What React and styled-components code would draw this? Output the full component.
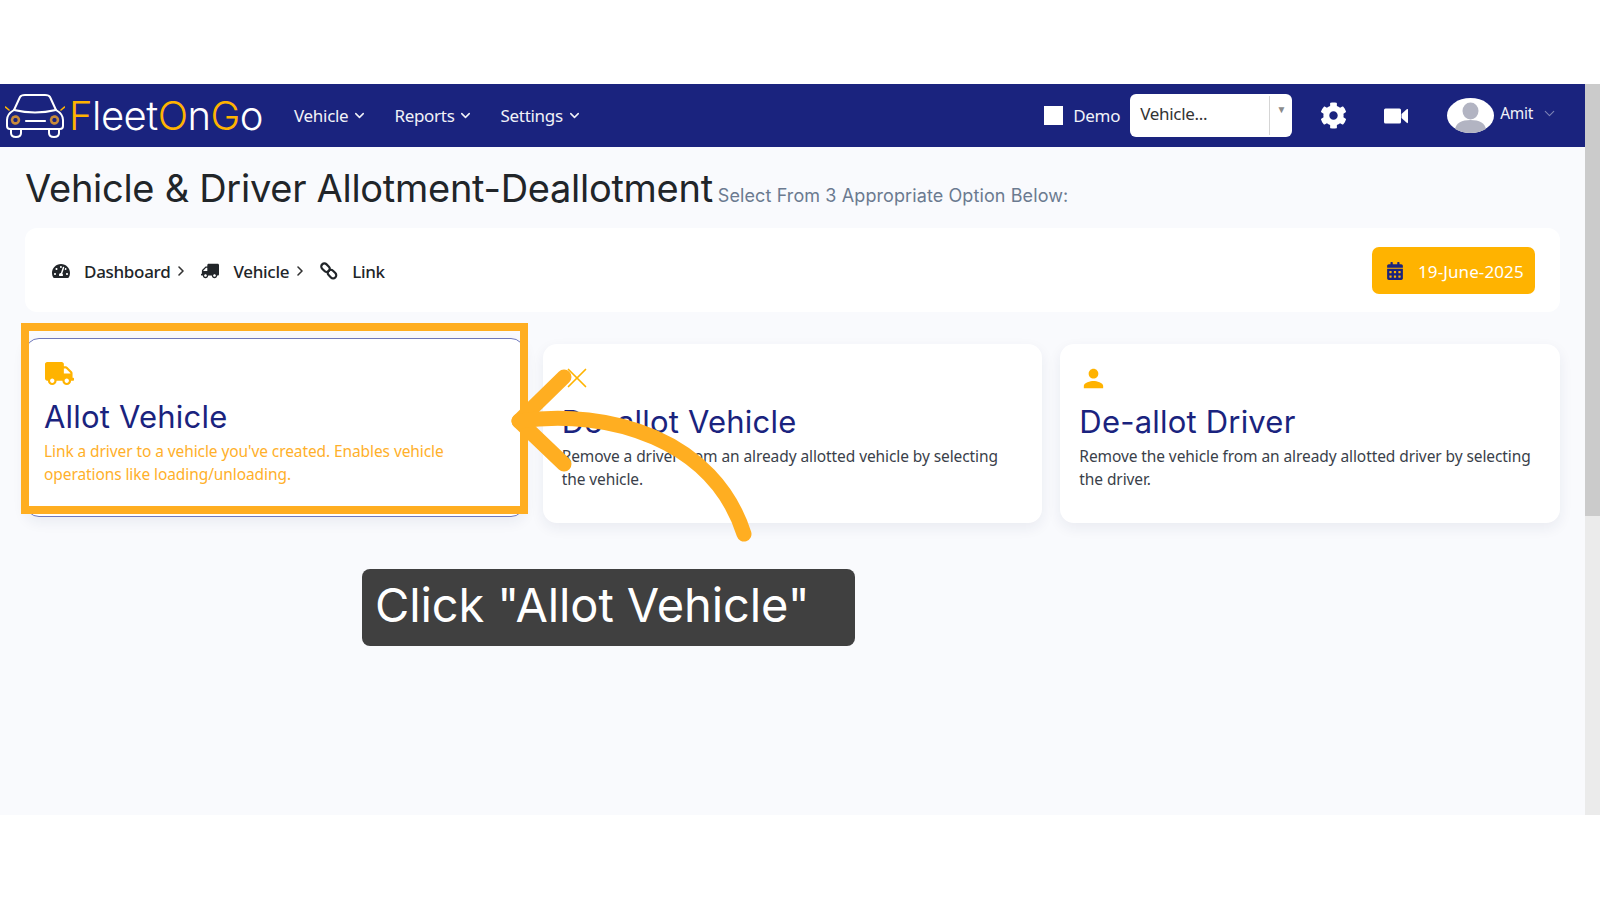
import React from "react";
import styled, { createGlobalStyle } from "styled-components";
import { FaTachometerAlt, FaTruck, FaCalendarAlt, FaCog } from "react-icons/fa";
import { MdPerson } from "react-icons/md";
import { FiChevronRight, FiChevronDown, FiX } from "react-icons/fi";

const Global = createGlobalStyle`
  html, body { margin: 0; background: #fff; }
  body { font-family: "Noto Sans", "Open Sans", sans-serif; overflow: hidden; }
  * { box-sizing: border-box; }
`;

const Page = styled.div`
  position: relative;
  width: 1600px;
  height: 900px;
  padding-top: 84px;
`;
const Screen = styled.div`
  display: flex;
  height: 731px;
`;
const Main = styled.div`
  flex: 1;
  min-width: 0;
  background: #f9fafd;
`;
const Scrollbar = styled.div`
  width: 15px;
  background: #ebebeb;
`;
const Thumb = styled.div`
  height: 432px;
  background: #cbcbcb;
`;
const Navbar = styled.header`
  height: 63px;
  background: #1a237e;
  display: flex;
  align-items: center;
  padding-left: 5px;
  color: #fff;
`;
const Brand = styled.div`
  display: flex;
  align-items: center;
  gap: 4px;
  width: 289px;
`;
const Wordmark = styled.span`
  font-family: "Inter", sans-serif;
  font-weight: 300;
  font-size: 40px;
  letter-spacing: -0.5px;
  line-height: 1;
  color: #fff;
`;
const Accent = styled.span`
  color: #ffb300;
`;
const NavMenu = styled.nav`
  display: flex;
  gap: 27px;
  padding-top: 0;
`;
const NavItem = styled.a`
  display: flex;
  align-items: center;
  gap: 4px;
  font-size: 17px;
  letter-spacing: -0.3px;
  color: #f1f2f8;
`;
const NavRight = styled.div`
  margin-left: auto;
  display: flex;
  align-items: center;
  padding-right: 27px;
`;
const DemoBox = styled.span`
  width: 19px;
  height: 19px;
  background: #fff;
  margin-right: 10px;
`;
const DemoLabel = styled.span`
  font-size: 17px;
  letter-spacing: -0.3px;
  margin-right: 10px;
  color: #f1f2f8;
`;
const VehicleSelect = styled.div`
  width: 162px;
  height: 43px;
  background: #fff;
  border-radius: 6px;
  display: flex;
  align-items: stretch;
  color: #333;
  font-size: 17px;
  letter-spacing: -0.3px;
  margin-right: 28px;
`;
const SelectValue = styled.span`
  width: 140px;
  padding-left: 10px;
  border-right: 1px solid #d5d5d5;
  margin: 2px 0;
  line-height: 35px;
`;
const SelectCaret = styled.span`
  flex: 1;
  text-align: center;
  font-size: 10px;
  line-height: 30px;
  color: #8a8a8a;
`;
const NavIconBox = styled.span`
  display: flex;
  font-size: ${(p) => p.$size}px;
  margin-right: ${(p) => p.$gap}px;
`;
const Avatar = styled.svg`
  width: 47px;
  height: 35px;
  margin-right: 6px;
`;
const UserName = styled.span`
  font-size: 15.5px;
  letter-spacing: -0.3px;
  margin-right: 8px;
  margin-top: -5px;
  color: #f1f2f8;
`;
const UserChevron = styled.span`
  display: flex;
  font-size: 17px;
  color: #7d83b5;
  margin-top: -4px;
`;
const Content = styled.main`
  padding: 0 25px;
`;
const TitleRow = styled.div`
  height: 81px;
  display: flex;
  align-items: baseline;
  padding: 16px 0 0 0;
`;
const Title = styled.h1`
  margin: 0;
  font-family: "Inter", sans-serif;
  font-weight: 400;
  font-size: 38px;
  letter-spacing: -0.28px;
  line-height: 50px;
  white-space: nowrap;
  color: #212529;
`;
const Subtitle = styled.span`
  font-family: "Inter", sans-serif;
  font-size: 18px;
  margin-left: 5px;
  letter-spacing: 0.1px;
  white-space: nowrap;
  color: #6b7a90;
`;
const CrumbBar = styled.div`
  height: 84px;
  background: #fff;
  border-radius: 12px;
  display: flex;
  align-items: center;
  justify-content: space-between;
  padding: 0 25px 0 27px;
`;
const Crumbs = styled.div`
  display: flex;
  align-items: center;
  font-size: 17px;
  font-weight: 500;
  letter-spacing: -0.3px;
  padding-top: 2px;
  color: #212529;
`;
const CrumbIcon = styled.span`
  display: flex;
  width: 18px;
  font-size: 18px;
  margin-right: 14px;
  transform: ${(p) => (p.$flip ? "scaleX(-1)" : "none")};
`;
const CrumbSep = styled.span`
  display: flex;
  font-size: 16px;
  margin: 0 12px 0 3px;
  color: #333;
`;
const DateButton = styled.div`
  width: 163px;
  height: 47px;
  border-radius: 7px;
  background: #ffb300;
  display: flex;
  align-items: center;
  gap: 14px;
  padding: 2px 0 0 14px;
  font-size: 17px;
  letter-spacing: 0.1px;
  color: #fff;
`;
const DateIcon = styled.span`
  display: flex;
  font-size: 18px;
  color: #1a237e;
`;
const CardGrid = styled.section`
  margin-top: 32px;
  display: grid;
  grid-template-columns: repeat(3, 1fr);
  gap: 18px;
`;
const Card = styled.article`
  height: 179px;
  background: #fff;
  border-radius: 14px;
  padding: 20px 19px 0;
  box-shadow: 0 5px 14px rgba(30, 40, 80, 0.07);
  ${(p) => p.$active && `
    transform: translateY(-6px);
    border: 1px solid #6f78bb;
    padding: 20px 18px 0;
  `}
`;
const CardIcon = styled.div`
  height: 28px;
  display: flex;
  align-items: center;
  font-size: ${(p) => p.$size}px;
  color: #ffb300;
  margin-left: ${(p) => p.$shift || 0}px;
`;
const CardTitle = styled.h2`
  margin: 10px 0 0;
  font-family: "Inter", sans-serif;
  font-weight: 400;
  font-size: 31px;
  letter-spacing: 0.2px;
  line-height: 40px;
  color: #1a237e;
`;
const CardText = styled.p`
  margin: 3px 0 0;
  font-size: 15.5px;
  letter-spacing: -0.09px;
  line-height: 22.8px;
  color: ${(p) => (p.$active ? "#ffb02a" : "#3a3f4a")};
`;
const Highlight = styled.div`
  position: absolute;
  left: 21px;
  top: 323px;
  width: 507px;
  height: 191px;
  border: 8.5px solid #ffae21;
`;
const Arrow = styled.svg`
  position: absolute;
  left: 500px;
  top: 360px;
  width: 260px;
  height: 190px;
  overflow: visible;
`;
const Tip = styled.div`
  position: absolute;
  left: 362px;
  top: 569px;
  width: 493px;
  height: 77px;
  background: #404040;
  border-radius: 8px;
  padding-left: 13px;
  font-family: "Inter", sans-serif;
  font-size: 47px;
  letter-spacing: -0.1px;
  line-height: 71px;
  color: #fff;
  white-space: nowrap;
`;

function CarLogo() {
  return (
    <svg width="60" height="46" viewBox="0 0 60 46" fill="none" stroke="#fff" strokeWidth="2" strokeLinecap="round" strokeLinejoin="round">
      <path d="M9 17 L15 4 Q16 2 20 2 H40 Q44 2 45 4 L51 17" />
      <path d="M9 17 Q30 22 51 17" />
      <path d="M9 17 Q2 21 2 27 V33 Q2 36 5 36 H55 Q58 36 58 33 V27 Q58 21 51 17" />
      <path d="M6 36 V40 Q6 44 11 44 Q16 44 16 40 V36 M44 36 V40 Q44 44 49 44 Q54 44 54 40 V36" />
      <path d="M21 28 H40" strokeWidth="2.2" />
      <path d="M0.5 14 L4 17 M59.5 14 L56 17" stroke="#ffb300" strokeWidth="1.6" />
      <circle cx="10.5" cy="27" r="3.4" stroke="#c88a3a" strokeDasharray="1.6 0.8" strokeWidth="2.6" />
      <circle cx="49.5" cy="27" r="3.4" stroke="#c88a3a" strokeDasharray="1.6 0.8" strokeWidth="2.6" />
    </svg>
  );
}

const ChainIcon = () => (
  <svg width="18" height="18" viewBox="0 0 18 18" fill="none" stroke="currentColor" strokeWidth="2.2">
    <rect x="0.8" y="2.6" width="9.5" height="6.2" rx="3.1" transform="rotate(45 5.5 5.7)" />
    <rect x="7.2" y="9" width="9.5" height="6.2" rx="3.1" transform="rotate(45 12 12.1)" />
  </svg>
);

const VideoIcon = () => (
  <svg width="24" height="16" viewBox="0 0 24 16" fill="#fff">
    <rect x="0" y="0.5" width="17" height="15" rx="1.5" />
    <path d="M17.5 6 L23 1 Q24 0.5 24 2 V14 Q24 15.5 23 15 L17.5 10Z" />
  </svg>
);

const Nav = ({ children }) => (
  <NavItem>
    {children}
    <FiChevronDown size={15} strokeWidth={2.4} />
  </NavItem>
);

export default function App() {
  return (
    <Page>
      <Global />
      <Screen>
        <Main>
          <Navbar>
            <Brand>
              <CarLogo />
              <Wordmark>
                <Accent>F</Accent>leet<Accent>O</Accent>n<Accent>G</Accent>o
              </Wordmark>
            </Brand>
            <NavMenu>
              <Nav>Vehicle</Nav>
              <Nav>Reports</Nav>
              <Nav>Settings</Nav>
            </NavMenu>
            <NavRight>
              <DemoBox />
              <DemoLabel>Demo</DemoLabel>
              <VehicleSelect>
                <SelectValue>Vehicle...</SelectValue>
                <SelectCaret>▼</SelectCaret>
              </VehicleSelect>
              <NavIconBox $size={27} $gap={37}><FaCog /></NavIconBox>
              <NavIconBox $size={24} $gap={39}><VideoIcon /></NavIconBox>
              <Avatar viewBox="0 0 47 35">
                <ellipse cx="23.5" cy="17.5" rx="23.5" ry="17.5" fill="#fff" />
                <ellipse cx="23.5" cy="13" rx="8" ry="8.5" fill="#b2b4c2" />
                <path d="M8 31 Q10 22 23.5 22 Q37 22 39 31 Q32 35 23.5 35 Q15 35 8 31Z" fill="#b2b4c2" />
              </Avatar>
              <UserName>Amit</UserName>
              <UserChevron><FiChevronDown strokeWidth={1.5} /></UserChevron>
            </NavRight>
          </Navbar>
          <Content>
            <TitleRow>
              <Title>Vehicle &amp; Driver Allotment-Deallotment</Title>
              <Subtitle>Select From 3 Appropriate Option Below:</Subtitle>
            </TitleRow>
            <CrumbBar>
              <Crumbs>
                <CrumbIcon><FaTachometerAlt /></CrumbIcon>
                Dashboard
                <CrumbSep><FiChevronRight strokeWidth={2.4} /></CrumbSep>
                <CrumbIcon $flip><FaTruck /></CrumbIcon>
                Vehicle
                <CrumbSep><FiChevronRight strokeWidth={2.4} /></CrumbSep>
                <CrumbIcon><ChainIcon /></CrumbIcon>
                Link
              </Crumbs>
              <DateButton>
                <DateIcon><FaCalendarAlt /></DateIcon>
                19-June-2025
              </DateButton>
            </CrumbBar>
            <CardGrid>
              <Card $active>
                <CardIcon $size={29} $shift={1}><FaTruck /></CardIcon>
                <CardTitle>Allot Vehicle</CardTitle>
                <CardText $active>Link a driver to a vehicle you've created. Enables vehicle operations like loading/unloading.</CardText>
              </Card>
              <Card>
                <CardIcon $size={34} $shift={-2}><FiX strokeWidth={1.2} /></CardIcon>
                <CardTitle>De-allot Vehicle</CardTitle>
                <CardText>Remove a driver from an already allotted vehicle by selecting the vehicle.</CardText>
              </Card>
              <Card>
                <CardIcon $size={29}><MdPerson /></CardIcon>
                <CardTitle>De-allot Driver</CardTitle>
                <CardText>Remove the vehicle from an already allotted driver by selecting the driver.</CardText>
              </Card>
            </CardGrid>
          </Content>
        </Main>
        <Scrollbar><Thumb /></Scrollbar>
      </Screen>
      <Highlight />
      <Arrow viewBox="500 360 260 190" fill="none" stroke="#ffae21" strokeWidth="15" strokeLinecap="round" strokeLinejoin="round">
        <path d="M564 377 L519 421 L564 464" />
        <path d="M519 421 C610 408 714 440 744 534" />
      </Arrow>
      <Tip>Click "Allot Vehicle"</Tip>
    </Page>
  );
}
